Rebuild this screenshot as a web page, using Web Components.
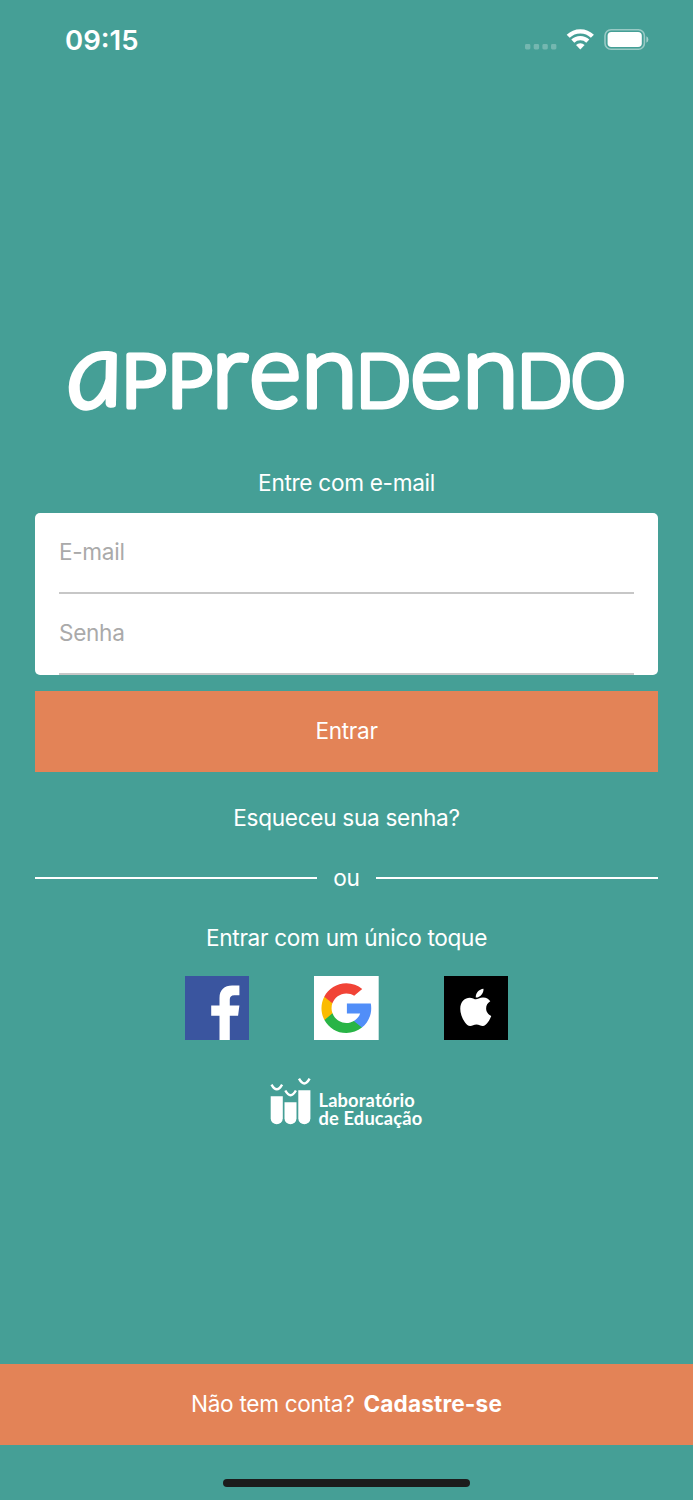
<!DOCTYPE html>
<html lang="pt-BR">
<head>
  <meta charset="utf-8">
  <title>Apprendendo</title>
  <style>
    body {
      margin: 0;
      background: #459f96;
      font-family: Inter, "Liberation Sans", sans-serif;
      color: #fff;
    }
  </style>
</head>
<body>
  <login-screen></login-screen>

  <script>
    class StatusBar extends HTMLElement {
      constructor() {
        super();
        this.attachShadow({ mode: "open" });
        this.shadowRoot.innerHTML = `
          <style>
            :host {
              display: flex;
              justify-content: space-between;
              align-items: center;
              height: 80px;
              padding: 0 43px 0 65px;
              box-sizing: border-box;
            }
            .time {
              font-size: 27.5px;
              font-weight: 600;
              line-height: 34px;
            }
            svg { display: block; }
          </style>
          <span class="time"><slot></slot></span>
          <svg width="126" height="24" viewBox="524 28 126 24" fill="#fff">
            <g opacity=".25">
              <rect x="525" y="44" width="5.4" height="5.4" rx="1.4"/>
              <rect x="533.7" y="44" width="5.4" height="5.4" rx="1.4"/>
              <rect x="542.4" y="44" width="5.4" height="5.4" rx="1.4"/>
              <rect x="551" y="44" width="5.4" height="5.4" rx="1.4"/>
            </g>
            <g fill="none" stroke="#fff" stroke-width="4.3">
              <path d="M568.2 36.3A17.2 17.2 0 0 1 592.4 36.3"/>
              <path d="M572.8 41.1A10.7 10.7 0 0 1 587.8 41.1"/>
            </g>
            <path d="M580.3 49.4L576 45.1A6.1 6.1 0 0 1 584.6 45.1Z"/>
            <rect x="605" y="29.8" width="39.4" height="19.4" rx="6" fill="none" stroke="#fff" stroke-width="1.6" opacity=".45"/>
            <rect x="607.6" y="32" width="34.2" height="15" rx="3.8"/>
            <path d="M646.4 36.3a3.6 3.6 0 0 1 0 6.4z" opacity=".5"/>
          </svg>
        `;
      }
    }
    customElements.define("status-bar", StatusBar);

    class BrandWordmark extends HTMLElement {
      constructor() {
        super();
        this.attachShadow({ mode: "open" });
        this.shadowRoot.innerHTML = `
          <style>
            :host { display: block; height: 140px; }
            svg { display: block; margin: 0 auto; overflow: visible; }
            text {
              font-family: Lato, "Open Sans", sans-serif;
              font-size: 103px;
              font-weight: 300;
              fill: #fff;
              stroke: #fff;
              stroke-width: 5.2;
              stroke-linejoin: round;
            }
            .caps { font-variant-caps: small-caps; }
            .slant { font-style: italic; }
          </style>
          <svg width="573" height="140" viewBox="60 300 573 140">
            <text y="407"><tspan class="slant" x="70" y="409" rotate="-6" textLength="56" lengthAdjust="spacingAndGlyphs">a</tspan><tspan class="caps" x="121" y="407" textLength="45.5" lengthAdjust="spacingAndGlyphs">p</tspan><tspan class="caps" x="167" textLength="45.5" lengthAdjust="spacingAndGlyphs">p</tspan><tspan x="211.5">r</tspan><tspan x="249" textLength="52" lengthAdjust="spacingAndGlyphs">e</tspan><tspan x="301">n</tspan><tspan class="caps" x="356">d</tspan><tspan x="410" textLength="52" lengthAdjust="spacingAndGlyphs">e</tspan><tspan x="462">n</tspan><tspan class="caps" x="517">d</tspan><tspan class="caps" x="571" textLength="54.5" lengthAdjust="spacingAndGlyphs">o</tspan></text>
          </svg>
        `;
      }
    }
    customElements.define("brand-wordmark", BrandWordmark);

    class FormField extends HTMLElement {
      constructor() {
        super();
        this.attachShadow({ mode: "open" });
        this.shadowRoot.innerHTML = `
          <style>
            :host {
              display: flex;
              align-items: center;
              height: 81px;
              box-sizing: border-box;
              padding-bottom: 1px;
              border-bottom: 2px solid #c7c7c7;
              color: #aaa;
            }
          </style>
          <slot></slot>
        `;
      }
    }
    customElements.define("form-field", FormField);

    class FormCard extends HTMLElement {
      constructor() {
        super();
        this.attachShadow({ mode: "open" });
        this.shadowRoot.innerHTML = `
          <style>
            :host {
              display: block;
              padding: 0 24px;
              background: #fff;
              border-radius: 5px;
            }
          </style>
          <slot></slot>
        `;
      }
    }
    customElements.define("form-card", FormCard);

    class ActionBar extends HTMLElement {
      constructor() {
        super();
        this.attachShadow({ mode: "open" });
        this.shadowRoot.innerHTML = `
          <style>
            :host {
              display: flex;
              align-items: center;
              justify-content: center;
              gap: 9px;
              height: 81px;
              box-sizing: border-box;
              padding-bottom: 1px;
              background: #e38357;
            }
            ::slotted(b) {
              font-weight: 700;
              letter-spacing: .15px;
            }
          </style>
          <slot></slot>
        `;
      }
    }
    customElements.define("action-bar", ActionBar);

    class LineDivider extends HTMLElement {
      constructor() {
        super();
        this.attachShadow({ mode: "open" });
        this.shadowRoot.innerHTML = `
          <style>
            :host {
              display: flex;
              align-items: center;
              gap: 16.5px;
            }
            i {
              flex: 1;
              height: 2px;
              background: #fff;
            }
          </style>
          <i></i><slot></slot><i></i>
        `;
      }
    }
    customElements.define("line-divider", LineDivider);

    const socialIcons = {
      facebook: `
        <rect width="195" height="195" fill="#3a559f"/>
        <path fill="#fff" d="M104 195V120H79V89H104V66C104 42 119 29 142 29H164V58H149C139 58 135 63 135 71V89H164L160 120H135V195Z"/>`,
      google: `
        <rect width="195" height="195" fill="#fff"/>
        <g transform="translate(22.5 22) scale(.293)">
          <path fill="#fbbb00" d="M113.47 309.408L95.648 375.94l-65.139 1.378C11.042 341.211 0 299.9 0 256c0-42.451 10.324-82.483 28.624-117.732h.014l57.992 10.632 25.404 57.644c-5.317 15.501-8.215 32.141-8.215 49.456.002 18.792 3.406 36.797 9.651 53.408z"/>
          <path fill="#518ef8" d="M507.527 208.176C510.467 223.662 512 239.655 512 256c0 18.328-1.927 36.206-5.598 53.451-12.462 58.683-45.025 109.925-90.134 146.187l-.014-.014-73.044-3.727-10.338-64.535c29.932-17.554 53.324-45.025 65.646-77.911h-136.89V208.176z"/>
          <path fill="#28b446" d="M416.253 455.624l.014.014C372.396 490.901 316.666 512 256 512c-97.491 0-182.252-54.491-225.491-134.681l82.961-67.91c21.619 57.698 77.278 98.771 142.53 98.771 28.047 0 54.323-7.582 76.87-20.818z"/>
          <path fill="#f14336" d="M419.404 58.936l-82.933 67.896c-23.335-14.586-50.919-23.012-80.471-23.012-66.729 0-123.429 42.957-143.965 102.724l-83.397-68.276h-.014C71.23 56.123 157.06 0 256 0c62.115 0 119.068 22.126 163.404 58.936z"/>
        </g>`,
      apple: `
        <rect width="195" height="195" fill="#000"/>
        <path fill="#fff" transform="translate(48 30) scale(.248 .252)" d="M318.7 268.7c-.2-36.7 16.4-64.4 50-84.8-18.8-26.9-47.2-41.7-84.7-44.6-35.5-2.8-74.3 20.7-88.5 20.7-15 0-49.4-19.7-76.4-19.7C63.3 141.2 4 184.8 4 273.5q0 39.3 14.4 81.2c12.8 36.7 59 126.7 107.2 125.2 25.2-.6 43-17.9 75.8-17.9 31.8 0 48.3 17.9 76.4 17.9 48.6-.7 90.4-82.5 102.6-119.3-65.2-30.7-61.7-90-61.7-91.9zm-56.6-164.2c27.3-32.4 24.8-61.9 24-72.5-24.1 1.4-52 16.4-67.9 34.9-17.5 19.8-27.8 44.3-25.6 71.9 26.1 2 49.9-11.4 69.5-34.2z"/>`,
    };

    class SocialButton extends HTMLElement {
      constructor() {
        super();
        this.attachShadow({ mode: "open" });
      }

      connectedCallback() {
        this.render();
      }

      render() {
        const network = this.getAttribute("network");
        this.shadowRoot.innerHTML = `
          <style>
            :host { display: block; }
            svg { display: block; }
          </style>
          <svg width="64.7" height="64.7" viewBox="0 0 195 195">${socialIcons[network]}</svg>
        `;
      }
    }
    customElements.define("social-button", SocialButton);

    class LabLogo extends HTMLElement {
      constructor() {
        super();
        this.attachShadow({ mode: "open" });
        this.shadowRoot.innerHTML = `
          <style>
            :host { display: flex; gap: 8px; width: 154px; height: 50px; }
            svg { display: block; flex: none; }
            .name {
              padding-top: 13px;
              font: 700 18.3px/18px Lato, sans-serif;
              letter-spacing: .15px;
              white-space: nowrap;
            }
          </style>
          <svg width="41" height="50" viewBox="269.5 1078 41 50" fill="#fff">
            <path d="M270.2 1096.2H282.3V1118.3a6 6 0 0 1-12.1 0Z"/>
            <path d="M284 1102.2H296V1118.3a6 6 0 0 1-12 0Z"/>
            <path d="M297.8 1090.2H309.9V1118.3a6 6 0 0 1-12.1 0Z"/>
            <g fill="none" stroke="#fff" stroke-width="2.4">
              <path d="M271 1084.6Q276.3 1094 281.6 1084.6"/>
              <path d="M284.8 1090.5Q290.1 1100 295.4 1090.5"/>
              <path d="M298.5 1078.7Q303.8 1088.2 309.1 1078.7"/>
            </g>
          </svg>
          <div class="name"><slot></slot></div>
        `;
      }
    }
    customElements.define("lab-logo", LabLogo);

    class LoginScreen extends HTMLElement {
      constructor() {
        super();
        this.attachShadow({ mode: "open" });
        this.shadowRoot.innerHTML = `
          <style>
            :host {
              display: flex;
              flex-direction: column;
              height: 1500px;
              font-size: 22.6px;
              line-height: 28px;
              letter-spacing: -.3px;
            }
            status-bar { letter-spacing: 0; }
            brand-wordmark { margin-top: 220px; letter-spacing: 0; }
            main {
              display: flex;
              flex-direction: column;
              padding: 29px 35px 0;
            }
            p { margin: 0; text-align: center; }
            form-card { margin-top: 16px; height: 162px; box-sizing: border-box; }
            main action-bar { margin-top: 16px; }
            .forgot { margin-top: 32px; }
            line-divider { margin-top: 32px; }
            .one-tap { margin-top: 32px; }
            .social {
              display: flex;
              justify-content: center;
              gap: 64.8px;
              margin-top: 23.5px;
            }
            lab-logo { align-self: center; margin-top: 37.5px; }
            footer { margin-top: auto; }
            .home {
              width: 247.5px;
              height: 8px;
              margin: 34.5px auto 13px;
              border-radius: 4px;
              background: #1c1c1c;
            }
          </style>
          <status-bar>09:15</status-bar>
          <brand-wordmark></brand-wordmark>
          <main>
            <p>Entre com e-mail</p>
            <form-card>
              <form-field>E-mail</form-field>
              <form-field>Senha</form-field>
            </form-card>
            <action-bar>Entrar</action-bar>
            <p class="forgot">Esqueceu sua senha?</p>
            <line-divider>ou</line-divider>
            <p class="one-tap">Entrar com um único toque</p>
            <div class="social">
              <social-button network="facebook"></social-button>
              <social-button network="google"></social-button>
              <social-button network="apple"></social-button>
            </div>
            <lab-logo><div>Laboratório</div><div>de Educação</div></lab-logo>
          </main>
          <footer>
            <action-bar><span>Não tem conta?</span><b>Cadastre-se</b></action-bar>
            <div class="home"></div>
          </footer>
        `;
      }
    }
    customElements.define("login-screen", LoginScreen);
  </script>
</body>
</html>
